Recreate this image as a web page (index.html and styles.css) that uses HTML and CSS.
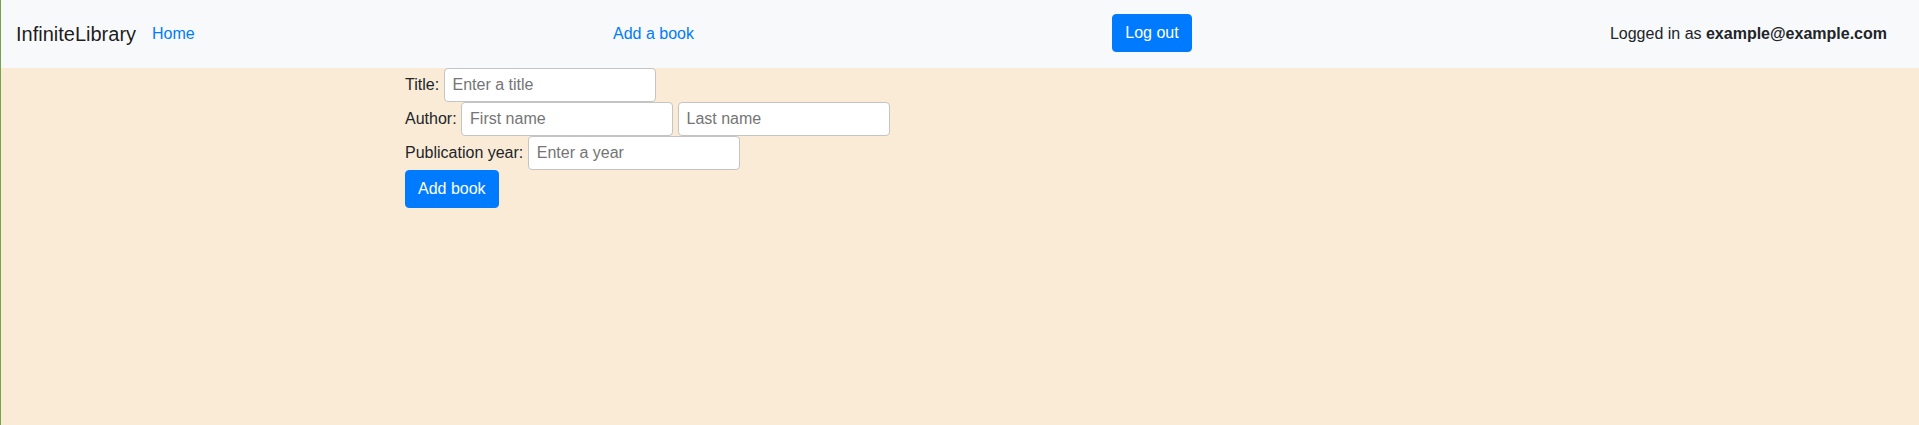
FILE: index.html
```html
<!DOCTYPE html>
<html lang="en">
<head>
<meta charset="utf-8">
<title>InfiniteLibrary</title>
<link rel="stylesheet" href="styles.css">
</head>
<body>
<nav class="navbar">
  <a class="brand" href="#">InfiniteLibrary</a>
  <ul class="nav">
    <li><a class="nav-link" href="#">Home</a></li>
    <li><a class="nav-link" href="#">Add a book</a></li>
    <li class="nav-btn"><button class="btn" type="button">Log out</button></li>
    <li class="user">Logged in as <b>example@example.com</b></li>
  </ul>
</nav>
<main class="container">
  <form class="book-form">
    <div class="row"><label for="title">Title:</label> <input id="title" type="text" placeholder="Enter a title"></div>
    <div class="row"><label for="first">Author:</label> <input id="first" type="text" placeholder="First name"> <input type="text" placeholder="Last name"></div>
    <div class="row"><label for="year">Publication year:</label> <input id="year" type="text" placeholder="Enter a year"></div>
    <div class="row"><button class="btn" type="submit">Add book</button></div>
  </form>
</main>
</body>
</html>
```

FILE: styles.css
```css
html {
  background: #faebd7;
}

body {
  margin: 0;
  min-height: 100vh;
  border-left: 1px solid #76a24a;
  background: #faebd7;
  font-family: "Liberation Sans", Helvetica, Arial, sans-serif;
  font-size: 16px;
  line-height: 1.5;
  color: #212529;
}

.navbar {
  display: flex;
  align-items: center;
  height: 68px;
  box-sizing: border-box;
  padding: 0 16px 0 15px;
  background: #f8f9fa;
}

.brand {
  font-size: 20px;
  line-height: 30px;
  margin-right: 16px;
  color: rgba(0, 0, 0, 0.9);
  text-decoration: none;
  white-space: nowrap;
}

.nav {
  flex: 1;
  display: flex;
  justify-content: space-between;
  align-items: center;
  list-style: none;
  margin: 0 16px 0 0;
  padding: 0;
}

.nav-link {
  color: #007bff;
  text-decoration: none;
}

.nav-btn {
  margin-bottom: 2px;
}

.user b {
  font-weight: bold;
}

.btn {
  display: inline-block;
  font-family: inherit;
  font-size: 16px;
  line-height: 24px;
  padding: 6px 12px;
  border: 1px solid #007bff;
  border-radius: 4px;
  background: #007bff;
  color: #fff;
  cursor: pointer;
  vertical-align: middle;
}

.container {
  box-sizing: border-box;
  max-width: 1140px;
  margin: 0 auto;
  padding: 0 15px;
}

.book-form {
  margin: 0;
}

.row input {
  box-sizing: border-box;
  width: 212px;
  height: 34px;
  padding: 0 8px;
  border: 1px solid #c4c4c4;
  border-radius: 4px;
  background: #fff;
  font-family: inherit;
  font-size: 16px;
  color: #495057;
  vertical-align: baseline;
}

.row input::placeholder {
  color: #757575;
}
```
